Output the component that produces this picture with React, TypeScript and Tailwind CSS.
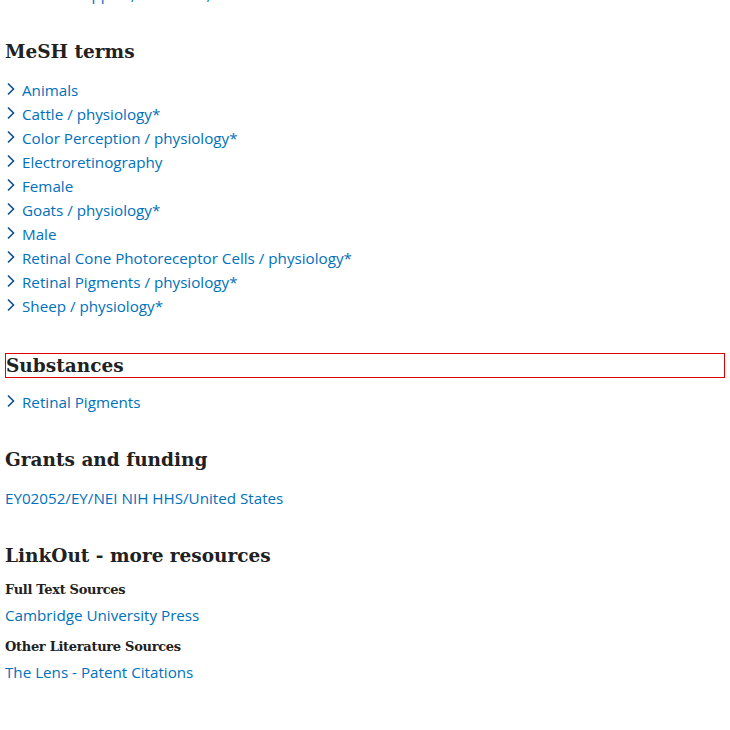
const linkCls = "text-[#0071bc] text-[15.2px] leading-[24px]"

const meshTerms = [
  "Animals",
  "Cattle / physiology*",
  "Color Perception / physiology*",
  "Electroretinography",
  "Female",
  "Goats / physiology*",
  "Male",
  "Retinal Cone Photoreceptor Cells / physiology*",
  "Retinal Pigments / physiology*",
  "Sheep / physiology*",
]

function Chevron() {
  return (
    <svg width="12" height="14" viewBox="0 0 12 14" className="shrink-0 mr-[5px] -mt-[2px]">
      <path d="M3 1.5 L8.5 7 L3 12.5" fill="none" stroke="#0b4f8a" strokeWidth="1.6" />
    </svg>
  )
}

function TermItem({ label }: { label: string }) {
  return (
    <li className="flex items-center h-[24px]">
      <Chevron />
      <a href="#" className={linkCls}>
        {label}
      </a>
    </li>
  )
}

const headingFont = "font-['DejaVu_Serif',serif] font-bold text-[18.5px] text-[#212121]"
const subHeading = "font-['DejaVu_Serif',serif] font-bold text-[13px] leading-[20px] text-[#212121] tracking-[-0.3px]"

export default function App() {
  return (
    <div className="bg-white min-h-[730px] w-[730px] overflow-hidden px-[5px] font-['Open_Sans',sans-serif]">
      <p className={`${linkCls} mt-[-18px]`}>Research Support, U.S. Gov't, P.H.S.</p>

      <section className="mt-[32px]">
        <h2 className={`${headingFont} leading-[28px]`}>MeSH terms</h2>
        <ul className="mt-[12px]">
          {meshTerms.map((t) => (
            <TermItem key={t} label={t} />
          ))}
        </ul>
      </section>

      <section className="mt-[35px]">
        <h2 className={`${headingFont} leading-[23px] border border-[#e00000]`}>Substances</h2>
        <ul className="mt-[12px]">
          <TermItem label="Retinal Pigments" />
        </ul>
      </section>

      <section className="mt-[32px]">
        <h2 className={`${headingFont} leading-[28px]`}>Grants and funding</h2>
        <a href="#" className={`${linkCls} block mt-[12px]`}>
          EY02052/EY/NEI NIH HHS/United States
        </a>
      </section>

      <section className="mt-[32px]">
        <h2 className={`${headingFont} leading-[28px]`}>LinkOut - more resources</h2>
        <h3 className={`${subHeading} mt-[10px]`}>Full Text Sources</h3>
        <a href="#" className={`${linkCls} block mt-[3px]`}>
          Cambridge University Press
        </a>
        <h3 className={`${subHeading} mt-[10px]`}>Other Literature Sources</h3>
        <a href="#" className={`${linkCls} block mt-[3px]`}>
          The Lens - Patent Citations
        </a>
      </section>
    </div>
  )
}
